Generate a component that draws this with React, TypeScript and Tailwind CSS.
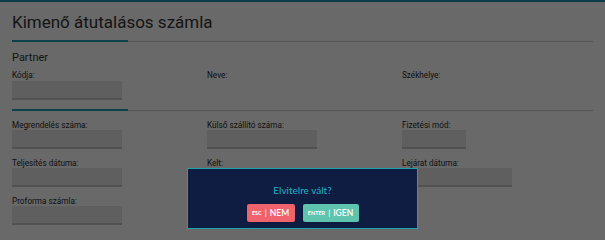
import React from 'react';

type Field = { label: string; input?: 'full' | 'short' | null };

const rows: Field[][] = [
    [
        { label: 'Megrendelés száma:', input: 'full' },
        { label: 'Külső szállító száma:', input: 'full' },
        { label: 'Fizetési mód:', input: 'short' },
    ],
    [
        { label: 'Teljesítés dátuma:', input: 'full' },
        { label: 'Kelt:', input: 'full' },
        { label: 'Lejárat dátuma:', input: 'full' },
    ],
    [{ label: 'Proforma számla:', input: 'full' }],
];

const Separator: React.FC<{ className?: string }> = ({ className = '' }) => (
    <div className={`flex w-[581px] items-center ${className}`}>
        <div className="h-[2px] w-[116px] bg-[#1f9fb3]" />
        <div className="h-px flex-1 bg-[#cfcfcf]" />
    </div>
);

const FormField: React.FC<{ field: Field }> = ({ field }) => (
    <div className="flex flex-col">
        <span className="text-[8.2px] leading-[10px] text-[#2a2a2a]">{field.label}</span>
        {field.input && (
            <div
                className={`h-[19px] border-b-2 border-[#c4c4c4] bg-[#e6e6e6] ${
                    field.input === 'short' ? 'w-[64px]' : 'w-[110px]'
                }`}
            />
        )}
    </div>
);

export default function App() {
    return (
        <div className="relative h-[240px] w-[605px] overflow-hidden bg-white font-['Roboto',sans-serif]">
            <div className="h-[2px] bg-[#208db4]" />
            <div className="px-[12px]">
                <h1 className="pt-[10px] text-[17px] leading-[21px] text-[#333]">Kimenő átutalásos számla</h1>
                <Separator className="mt-[7px]" />

                <p className="mt-[9px] text-[11px] leading-[13px] text-[#333]">Partner</p>
                <div className="mt-[6px] grid grid-cols-[195px_195px_195px]">
                    <div className="flex flex-col">
                        <span className="text-[8.2px] leading-[10px] text-[#2a2a2a]">Kódja:</span>
                        <div className="mt-[1px] h-[19px] w-[110px] border-b-2 border-[#c4c4c4] bg-[#e6e6e6]" />
                    </div>
                    <span className="text-[8.2px] leading-[10px] text-[#2a2a2a]">Neve:</span>
                    <span className="text-[8.2px] leading-[10px] text-[#2a2a2a]">Székhelye:</span>
                </div>
                <Separator className="mt-[9px]" />

                <div className="mt-[9px] flex flex-col gap-[9px]">
                    {rows.map((row, i) => (
                        <div key={i} className="grid grid-cols-[195px_195px_195px]">
                            {row.map((f) => (
                                <FormField key={f.label} field={f} />
                            ))}
                        </div>
                    ))}
                </div>
            </div>

            {/* modal backdrop */}
            <div className="absolute inset-0 bg-black/[0.59]" />

            <div className="absolute left-[187px] top-[168px] flex h-[61px] w-[231px] flex-col items-center border border-[#1aa3ab] bg-[#0e1d41] pt-[15px] font-['Lato',sans-serif]">
                <p className="text-[10px] leading-[12px] text-[#22b3c8]">Elvitelre vált?</p>
                <div className="mt-[8px] flex gap-[8px]">
                    <button className="flex h-[18px] w-[48px] items-center justify-center gap-[3px] rounded-[2px] bg-[#f0636c] text-white shadow-sm">
                        <span className="text-[5.5px] font-bold">ESC</span>
                        <span className="text-[8px]">|</span>
                        <span className="text-[8.5px] font-semibold">NEM</span>
                    </button>
                    <button className="flex h-[18px] w-[56px] items-center justify-center gap-[3px] rounded-[2px] bg-[#5ec4ae] text-white shadow-sm">
                        <span className="text-[5.5px] font-bold">ENTER</span>
                        <span className="text-[8px]">|</span>
                        <span className="text-[8.5px] font-semibold">IGEN</span>
                    </button>
                </div>
            </div>
        </div>
    );
}
